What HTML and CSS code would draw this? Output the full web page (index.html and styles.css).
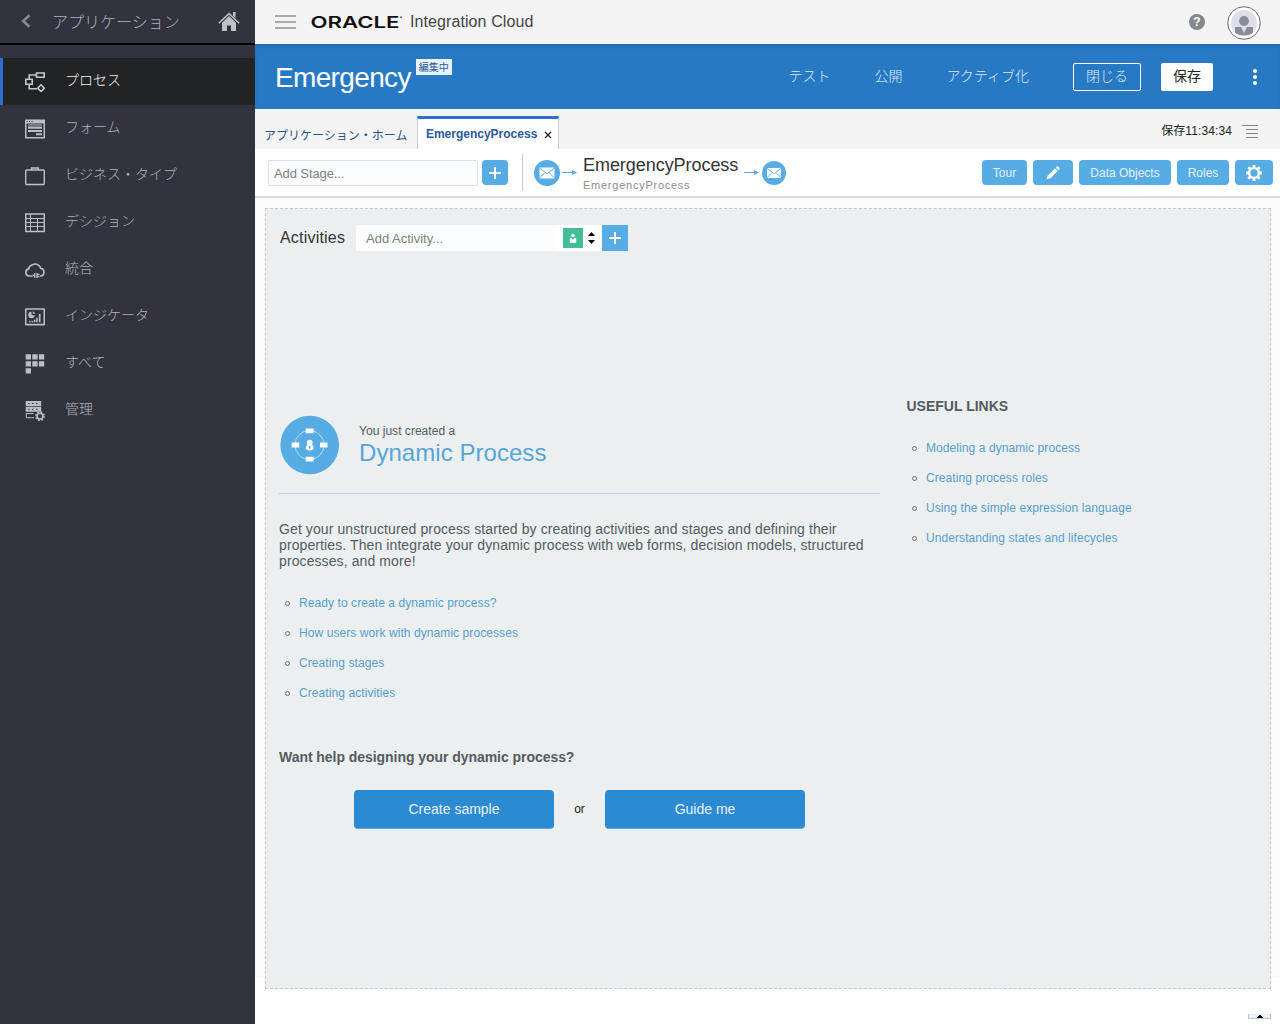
FILE: index.html
```html
<!DOCTYPE html>
<html lang="ja">
<head>
<meta charset="utf-8">
<title>Oracle Integration Cloud</title>
<link rel="stylesheet" href="styles.css">
</head>
<body>
<div class="app">
  <aside class="sidebar">
    <div class="side-head">
      <svg class="back" width="11" height="14" viewBox="0 0 11 14"><path d="M9.500 1.200 3.200 7l6.300 5.800" fill="none" stroke="#85868b" stroke-width="2.700"/></svg>
      <span class="side-title">アプリケーション</span>
      <svg class="home" width="22" height="20" viewBox="0 0 22 20"><path d="M.8 11.200 11 1.600l10.200 9.600" fill="none" stroke="#bfc1c7" stroke-width="1.500"/><path d="M15 0h2.500v6L15 3.700z" fill="#bfc1c7"/><path d="M4 10.700l7-6.700 7 6.700V19h-5v-5.500H9V19H4z" fill="#bfc1c7"/></svg>
    </div>
    <nav class="side-nav">
      <a class="item active"><svg width="20" height="20" viewBox="0 0 20 20" fill="none" stroke="#c6c7ca" stroke-width="1.600"><path d="M11.500 1h7.700v4.200h-7.700zM.8 7.200h6.400v5H.8zM11.500 3H4.200v4.200M4.200 12.200v4.600H12M16 12.800l3.300 3.400-3.300 3.300-3.300-3.300z"/></svg><span>プロセス</span></a>
      <a class="item"><svg width="20" height="20" viewBox="0 0 20 20" fill="#bdbec5"><path d="M0 .500h20v19H0zM1.500 4.500V18h17V4.500z" fill-rule="evenodd"/><path d="M1.500 2h1v1h-1zM4 2h1v1H4zM6.500 2h1v1h-1z" fill="#32333f"/><path d="M3 5.500h14v1H3zM3 7.500h14v2.300H3zM3 11h14v2H3zM11 14.300h6v2h-6z"/></svg><span>フォーム</span></a>
      <a class="item"><svg width="20" height="20" viewBox="0 0 20 20" fill="none" stroke="#bdbec5" stroke-width="1.400"><rect x=".7" y="4" width="18.600" height="14.500" rx="1"/><path d="M6.500 4V2h7v2"/></svg><span>ビジネス・タイプ</span></a>
      <a class="item"><svg width="20" height="20" viewBox="0 0 20 20" fill="none" stroke="#bdbec5"><path stroke-width="1.500" d="M.7 1h18.600v17.600H.7z"/><path d="M1 5.500h18M1 9.500h18M1 13.500h18M5.500 1v18M12.500 5v14"/></svg><span>デシジョン</span></a>
      <a class="item"><svg width="20" height="20" viewBox="0 0 20 20" fill="none" stroke="#bdbec5" stroke-width="1.600"><path d="M7.500 16h-3A3.600 3.600 0 0 1 3.600 8.900 5.200 5.200 0 0 1 7.500 4.800a5.600 5.600 0 0 1 8.200 3.400 4 4 0 0 1 .3 7.800h-1"/><path d="M9.800 13v5M12 13v5M7.500 15.500h2M12 14.300h2.500M12 16.500h2.500" stroke-width="1.300"/></svg><span>統合</span></a>
      <a class="item"><svg width="20" height="20" viewBox="0 0 20 20" fill="none" stroke="#bdbec5"><rect x=".7" y="2" width="18.600" height="15.600" rx=".5" stroke-width="1.600"/><path d="M6.500 4.800a3.200 3.200 0 1 0 3.200 3.400H6.500z" fill="#bdbec5" stroke="none"/><path d="M7.800 4.300A3 3 0 0 1 10 6.800H7.800z" fill="#bdbec5" stroke="none"/><path d="M4 14.500h1.500M6.500 14.500H8M9.700 15.200v-2.500M12 15.200v-4.500M14.700 15.200V7" stroke-width="1.600"/></svg><span>インジケータ</span></a>
      <a class="item"><svg width="20" height="20" viewBox="0 0 20 20" fill="#bdbec5"><path d="M.7.200h5.300v5.300H.7zM7.300.200h5.300v5.300H7.300zM13.900.200h5.300v5.300h-5.300zM.7 7.200h5.300v5.300H.7zM7.300 7.200h5.300v5.300H7.300zM13.900 7.200h5.300v5.300h-5.300zM.7 14.200h5.300v5.300H.7z"/></svg><span>すべて</span></a>
      <a class="item"><svg width="20" height="20" viewBox="0 0 20 20" fill="none" stroke="#bdbec5"><path d="M.7 0h15.500v5H.7zM.7 5.800h15.500v5H.7z" fill="#bdbec5" stroke="none"/><path d="M3 2.500h10.500M3 8.300h10.500" stroke="#32333f" stroke-dasharray="1.500 2.500"/><path d="M8.500 12.500H1.300v4.200H9"/><circle cx="15" cy="15.200" r="2.900" stroke-width="1.500"/><circle cx="15" cy="15.200" r="4.200" stroke-width="1.500" stroke-dasharray="1.700 1.600"/></svg><span>管理</span></a>
    </nav>
  </aside>

  <div class="main">
    <header class="topbar">
      <svg class="burger" width="21" height="14" viewBox="0 0 21 14"><path d="M0 1h21M0 7h21M0 13h21" stroke="#8b9197" stroke-width="1.400"/></svg>
      <svg class="brand" width="92" height="18" viewBox="0 0 92 18"><text x="-.5" y="14.500" class="logo" textLength="89" lengthAdjust="spacingAndGlyphs">ORACLE</text><circle cx="90" cy="4.200" r=".9" fill="#555"/></svg>
      <span class="product">Integration Cloud</span>
      <span class="help">?</span>
      <svg class="avatar" width="34" height="34" viewBox="0 0 34 34"><circle cx="17" cy="17" r="16.300" fill="#fff" stroke="#6b6b70"/><circle cx="17" cy="17" r="13" fill="#dcdfe5"/><circle cx="17" cy="15" r="4.900" fill="#8b8c9b"/><path d="M8 21h6l3 6 3-6h6v6q-9 5-18 0z" fill="#8b8c9b"/></svg>
    </header>

    <div class="titlebar">
      <h1>Emergency</h1><span class="badge">編集中</span>
      <div class="actions">
        <a class="test">テスト</a><a class="publish">公開</a><a class="activate">アクティブ化</a>
        <button class="close"><span>閉じる</span></button><button class="save"><span>保存</span></button>
        <svg width="4" height="16" viewBox="0 0 4 16" fill="#fff"><circle cx="2" cy="2" r="2"/><circle cx="2" cy="8" r="2"/><circle cx="2" cy="14" r="2"/></svg>
      </div>
    </div>

    <div class="tabs">
      <a class="tab">アプリケーション・ホーム</a>
      <a class="tab current">EmergencyProcess<svg width="8" height="8" viewBox="0 0 8 8"><path d="M1 1l6 6M7 1 1 7" stroke="#222" stroke-width="1.300"/></svg></a>
      <span class="saved">保存11:34:34</span>
      <svg class="lines" width="16" height="13" viewBox="0 0 16 13"><path d="M0 .5h16M4 4.500h12M4 8.500h12M4 12.500h12" stroke="#7f868c"/></svg>
    </div>

    <div class="toolbar">
      <div class="field stage">Add Stage...</div>
      <button class="plus round"><svg width="12" height="12" viewBox="0 0 12 12"><path d="M6 0v12M0 6h12" stroke="#fff" stroke-width="2"/></svg></button>
      <div class="flow">
        <svg width="26" height="26" viewBox="0 0 26 26"><circle cx="13" cy="13" r="13" fill="#57ace3"/><path d="M5.500 7.500h15v11h-15z" fill="#fff"/><path d="M5.500 8l7.500 5.700L20.500 8M5.500 18l5.500-5.500M20.500 18 15 12.500" stroke="#57ace3" fill="none"/></svg>
        <svg class="arrow" width="15" height="6" viewBox="0 0 15 6"><path d="M0 2.500h11" stroke="#57ace3"/><path d="M10 0l5 2.500L10 5z" fill="#57ace3"/></svg>
        <div class="names"><strong>EmergencyProcess</strong><small>EmergencyProcess</small></div>
        <svg class="arrow" width="15" height="6" viewBox="0 0 15 6"><path d="M0 2.500h11" stroke="#57ace3"/><path d="M10 0l5 2.500L10 5z" fill="#57ace3"/></svg>
        <svg class="end" width="24" height="24" viewBox="0 0 26 26"><circle cx="13" cy="13" r="13" fill="#57ace3"/><path d="M5.500 7.500h15v11h-15z" fill="#fff"/><path d="M5.500 8l7.500 5.700L20.500 8M5.500 18l5.500-5.500M20.500 18 15 12.500" stroke="#57ace3" fill="none"/></svg>
      </div>
      <div class="tools">
        <button class="tour">Tour</button>
        <button class="edit"><svg width="14" height="14" viewBox="0 0 14 14" fill="#fff"><path d="M.5 13.500l1.200-4L9 2.200l2.800 2.800-7.300 7.300zM9.700 1.500l1-1q.8-.6 1.600.2l1 1q.8.800.2 1.600l-1 1z"/></svg></button>
        <button class="data">Data Objects</button>
        <button class="roles">Roles</button>
        <button class="gear"><svg width="16" height="16" viewBox="0 0 16 16" fill="none" stroke="#fff"><circle cx="8" cy="8" r="4.900" stroke-width="2.400"/><path d="M8 0v2.500M8 13.500V16M0 8h2.500M13.500 8H16M2.300 2.300l1.800 1.800M11.900 11.900l1.800 1.800M13.700 2.300l-1.800 1.800M4.100 11.900l-1.800 1.800" stroke-width="2.800"/></svg></button>
      </div>
    </div>

    <div class="workspace">
      <section class="canvas">
        <div class="activities">
          <span class="label">Activities</span>
          <div class="activity-field">Add Activity...</div>
          <div class="kind">
            <svg width="20" height="20" viewBox="0 0 20 20"><path d="M0 0h20v20H0z" fill="#41bd98"/><circle cx="10" cy="7.500" r="1.700" fill="#fff"/><path d="M6.800 9.800h1.700L10 11.800l1.500-2h1.700v5H6.800z" fill="#fff"/></svg>
            <svg width="7" height="12" viewBox="0 0 7 12"><path d="M0 4 3.500 0 7 4zM0 8l3.500 4L7 8z"/></svg>
          </div>
          <button class="plus"><svg width="12" height="12" viewBox="0 0 12 12"><path d="M6 0v12M0 6h12" stroke="#fff" stroke-width="2"/></svg></button>
        </div>
        <div class="welcome">
          <article class="intro">
            <div class="hero">
              <svg width="60" height="60" viewBox="0 0 60 60"><circle cx="30.700" cy="30" r="29.300" fill="#57ace3"/><circle cx="30.500" cy="30" r="14.500" fill="none" stroke="#b3dcf6"/><path d="M26.700 13.500h8v4.800h-8zM26.700 41.700h8v4.800h-8zM12.700 27.600h7.500v4.800h-7.500zM41 27.600h7.500v4.800H41z" fill="#fff"/><circle cx="30.700" cy="27.700" r="2.900" fill="#fff"/><path d="M26.700 34q0-4 2.500-4h3q2.500 0 2.500 4-4 3-8 0z" fill="#fff"/><path d="M30 31h1.400l.2 2-.9 1-.9-1z" fill="#57ace3"/></svg>
              <div><p>You just created a</p><h2>Dynamic Process</h2></div>
            </div>
            <p class="lead">Get your unstructured process started by creating activities and stages and defining their<br>properties. Then integrate your dynamic process with web forms, decision models, structured<br>processes, and more!</p>
            <ul class="links">
              <li><a>Ready to create a dynamic process?</a></li>
              <li><a>How users work with dynamic processes</a></li>
              <li><a>Creating stages</a></li>
              <li><a>Creating activities</a></li>
            </ul>
            <h3 class="want">Want help designing your dynamic process?</h3>
            <div class="choices"><button>Create sample</button><span>or</span><button>Guide me</button></div>
          </article>
          <aside class="useful">
            <h3>USEFUL LINKS</h3>
            <ul class="links">
              <li><a>Modeling a dynamic process</a></li>
              <li><a>Creating process roles</a></li>
              <li><a>Using the simple expression language</a></li>
              <li><a>Understanding states and lifecycles</a></li>
            </ul>
          </aside>
        </div>
      </section>
    </div>
    <footer class="bottom"><span class="expander"><svg width="6" height="4" viewBox="0 0 6 4"><path d="M0 4V3h1V2h1V1h2v1h1v1h1v1z"/></svg></span></footer>
  </div>
</div>
</body>
</html>
```
FILE: styles.css
```css
*, *::before { box-sizing: border-box; }
body, h1, h2, h3, p, ul { margin: 0; padding: 0; }
body {
  font-family: "Liberation Sans", "Noto Sans CJK JP", sans-serif;
  font-size: 12px;
  color: #333;
  background: #fff;
}
svg { display: block; flex: none; }
button {
  font: inherit;
  border: 0;
  padding: 0;
  margin: 0;
  display: flex;
  align-items: center;
  justify-content: center;
}
.app { display: flex; width: 1280px; height: 1024px; overflow: hidden; }

/* Sidebar */
.sidebar { width: 255px; flex: none; background: #32333f; color: #b0b1b5; font-family: "Noto Sans CJK JP", sans-serif; font-weight: 300; }
.side-head { height: 45px; border-bottom: 2px solid #000; display: flex; align-items: center; padding: 0 15px 0 20px; }
.back { margin-bottom: 1px; }
.side-title { font-size: 16px; line-height: 20px; margin: -2px 0 0 21px; }
.home { margin-left: auto; }
.side-nav { padding-top: 13px; }
.item { display: flex; align-items: center; height: 47px; padding-left: 25px; font-size: 14px; line-height: 20px; }
.item svg { margin: 0 20px 0 0; }
.item span { margin-top: -5px; }
.item.active { background: #222324; border-left: 3px solid #2b6fd0; padding-left: 22px; color: #f2f2f2; }

.main { flex: 1; display: flex; flex-direction: column; min-width: 0; }

/* Header */
.topbar { height: 44px; background: #f4f4f4; display: flex; align-items: center; padding: 0 19px 0 20px; }
.burger { margin-bottom: 1px; }
.brand { margin-left: 15px; }
.logo { font: 600 16px Inter, sans-serif; fill: #111; }
.product { font-size: 16px; color: #444; margin-left: 7px; letter-spacing: .09px; }
.help { margin-left: auto; width: 16px; height: 16px; border-radius: 50%; background: #85898c; color: #fff; font-weight: 700; font-size: 12px; line-height: 16px; text-align: center; }
.avatar { margin: 2px 0 0 22px; }

.titlebar { height: 65px; background: #2879c4; box-shadow: inset 0 3px 4px -2px #1f65a8; display: flex; padding-left: 20px; color: #fff; }
h1 { font-weight: 400; font-size: 28px; line-height: 32px; letter-spacing: -.65px; margin-top: 18px; }
.badge { align-self: flex-start; margin: 15px 0 0 5px; width: 36px; height: 16px; background: #e8f1f9; color: #2a5c98; font-size: 10px; line-height: 17px; text-align: center; }
.actions { margin-left: auto; display: flex; align-items: center; font: 300 14px/20px "Noto Sans CJK JP", sans-serif; padding-right: 23px; color: #dceafa; }
.actions a, .actions span { margin-top: -3px; }
.actions .publish { margin-left: 44px; }
.actions .activate { margin-left: 44px; }
.close { margin-left: 44px; width: 68px; height: 28px; border: 1px solid #fff; border-radius: 2px; background: none; color: #dceafa; }
.save { margin-left: 20px; width: 52px; height: 28px; border-radius: 2px; background: #fff; color: #222; font-weight: 400; }
.actions svg { margin-left: 40px; }

/* Tabs */
.tabs { height: 40px; background: #f4f4f4; display: flex; align-items: flex-start; padding: 7px 22px 0 9px; }
.tab { line-height: 41px; height: 33px; color: #2b5589; }
.tab.current { margin-left: 9.500px; width: 142px; border: 1px solid #c5ccd5; border-width: 3px 1px 0; border-top-color: #2b6fd0; background: #fff; color: #2a5a9c; font-weight: 700; line-height: 30px; padding-left: 8px; display: flex; align-items: center; }
.current svg { margin: 2px 0 0 7px; }
.saved { margin-left: auto; line-height: 31px; color: #222; letter-spacing: .1px; }
.lines { margin: 9px 0 0 10px; }

/* Toolbar */
.toolbar { height: 49px; flex: none; background: #fff; border-bottom: 2px solid #dcdcdc; display: flex; align-items: center; padding: 0 7px 0 13px; }
.field.stage { width: 210px; height: 26px; border: 1px solid #dbe1e6; border-radius: 2px; background: #fcfdfe; color: #808080; font-size: 13px; line-height: 26px; letter-spacing: -.1px; padding-left: 5px; }
.plus { width: 26px; height: 26px; background: #57ace3; }
.plus.round { margin-left: 4px; border-radius: 4px; height: 25px; }
.flow { margin-left: 14px; height: 37px; border-left: 1px solid #ccc; padding-left: 11px; display: flex; align-items: center; }
.arrow { margin: 0 2px; }
.end { margin-left: 1px; }
.names { margin: 0 4px; }
.names strong, .names small { display: block; font-weight: 400; }
.names strong { font-size: 18px; line-height: 22px; color: #333; letter-spacing: -.05px; margin-top: 1px; }
.names small { font-size: 11px; line-height: 14px; letter-spacing: .75px; color: #8c8c8c; margin-top: 2px; }
.tools { margin-left: auto; display: flex; gap: 6px; }
.tools button { height: 25px; border-radius: 4px; background: #57ace3; color: #e3f2fc; padding-top: 1px; }
.tour { width: 45px; }
.edit { width: 40px; }
.data { width: 92px; }
.roles { width: 52px; }
.gear { width: 38px; }

/* Canvas */
.workspace { height: 779px; flex: none; background: #fafafa; padding: 10px 9px 0 10px; }
.canvas { height: 781px; background: #ebeff0; border: 1px dashed #c8c8c8; padding: 16px 0 0 13px; }
.activities { display: flex; align-items: center; height: 26px; }
.label { width: 77px; font-size: 16px; color: #333; padding-left: 1px; letter-spacing: .2px; }
.activity-field { width: 200px; height: 26px; background: #fcfdfe; color: #808080; font-size: 13px; line-height: 28px; padding-left: 10px; border-radius: 2px 0 0 2px; }
.kind { width: 46px; height: 26px; background: #fff; display: flex; align-items: center; gap: 5px; padding-left: 7px; }
.welcome { display: flex; padding-top: 147px; }
.intro { width: 601px; padding-top: 17px; color: #555b61; }
.hero { display: flex; height: 79px; border-bottom: 1px solid #c6ccd8; }
.hero div { margin-left: 20px; }
.hero p { line-height: 16px; margin-top: 8px; letter-spacing: .03px; }
.hero h2 { font-size: 24px; line-height: 28px; font-weight: 400; color: #57a5d8; letter-spacing: .05px; }
.lead { margin-top: 27px; font-size: 14px; line-height: 16px; letter-spacing: .1px; white-space: nowrap; }
.links { list-style: none; }
.links li { line-height: 14px; margin-bottom: 16px; padding-left: 6px; display: flex; align-items: center; letter-spacing: .08px; }
.links li::before { content: ""; flex: none; width: 5px; height: 5px; border: 1px solid #6a7077; border-radius: 50%; margin: 1px 9px 0 0; }
.links a { color: #579ecd; }
.intro .links { margin-top: 27px; }
h3 { font-size: 14px; line-height: 16px; color: #555b61; }
.want { margin-top: 49px; letter-spacing: -.05px; }
.choices { display: flex; align-items: center; margin: 25px 0 0 75px; color: #222; }
.choices button { width: 200px; height: 39px; border-radius: 4px; background: #2b8ad1; border-bottom: 1px solid #58a8df; color: #e6f2fb; font-size: 14px; }
.choices span { width: 51px; text-align: center; margin-top: -2px; }
.useful { margin-left: 26px; }
.useful h3 { padding-left: .5px; }
.useful .links { margin-top: 27px; }

.bottom { flex: 1; display: flex; justify-content: flex-end; align-items: flex-end; padding: 0 9px 5px; }
.expander { width: 23px; height: 5px; background: #edf0f5; border: solid #bdc5d6; border-width: 0 1px 1px; display: flex; align-items: center; justify-content: center; }
```
